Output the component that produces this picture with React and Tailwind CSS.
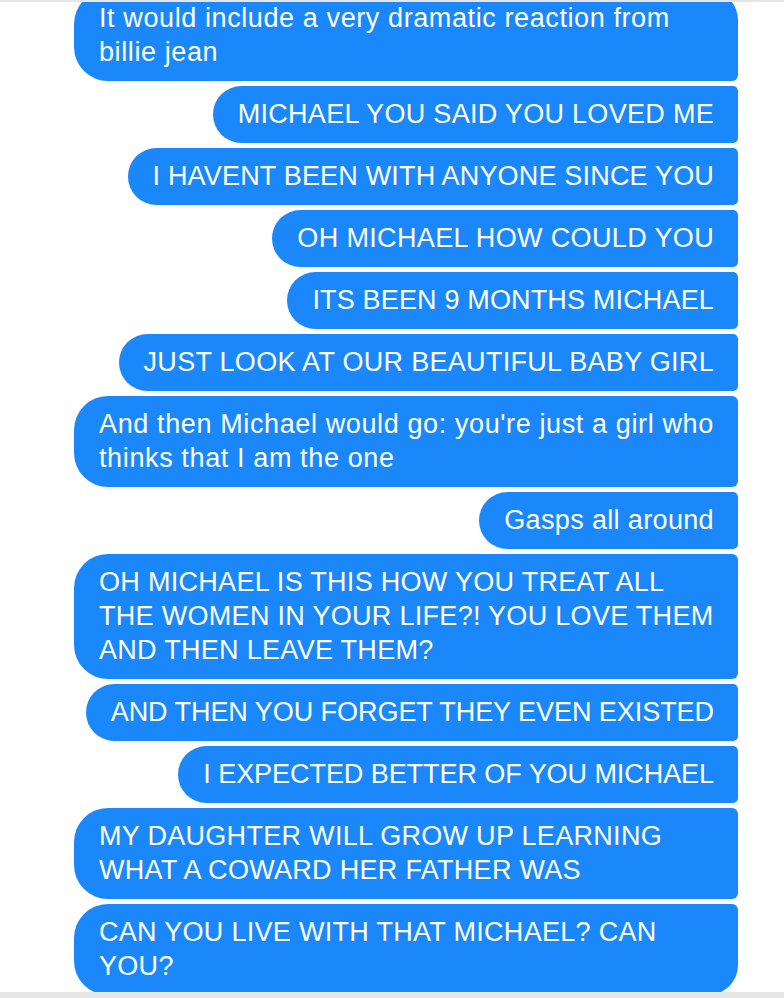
import React from 'react';

const messages = [
  { lines: ['It would include a very dramatic reaction from', 'billie jean'], track: 'tracking-[0.6px]' },
  { lines: ['MICHAEL YOU SAID YOU LOVED ME'] },
  { lines: ['I HAVENT BEEN WITH ANYONE SINCE YOU'], track: 'tracking-[0.18px]' },
  { lines: ['OH MICHAEL HOW COULD YOU'], track: 'tracking-[0.36px]' },
  { lines: ['ITS BEEN 9 MONTHS MICHAEL'], track: 'tracking-[0.16px]' },
  { lines: ['JUST LOOK AT OUR BEAUTIFUL BABY GIRL'] },
  {
    lines: ["And then Michael would go: you're just a girl who", 'thinks that I am the one'],
    track: 'tracking-[0.62px]',
  },
  { lines: ['Gasps all around'], track: 'tracking-[0.35px]' },
  {
    lines: [
      'OH MICHAEL IS THIS HOW YOU TREAT ALL',
      'THE WOMEN IN YOUR LIFE?! YOU LOVE THEM',
      'AND THEN LEAVE THEM?',
    ],
  },
  { lines: ['AND THEN YOU FORGET THEY EVEN EXISTED'], track: 'tracking-[-0.05px]' },
  { lines: ['I EXPECTED BETTER OF YOU MICHAEL'], track: 'tracking-[-0.06px]' },
  { lines: ['MY DAUGHTER WILL GROW UP LEARNING', 'WHAT A COWARD HER FATHER WAS'] },
  { lines: ['CAN YOU LIVE WITH THAT MICHAEL? CAN', 'YOU?'] },
];

// bubble corner shape depends on its place in the group
const cornerFor = (i, total) => {
  if (i === 0) return 'rounded-tr-[30px] rounded-br-[6px]';
  if (i === total - 1) return 'rounded-tr-[6px] rounded-br-[30px]';
  return 'rounded-r-[6px]';
};

const Bubble = ({ lines, corner, track = 'tracking-[0.3px]' }) => {
  const multi = lines.length > 1;
  return (
    <div
      className={`bg-[#1a88fa] text-white text-[27px] leading-[34px] pl-[25px] pr-[24px] pt-[11px] pb-[12px] rounded-l-[34px] whitespace-nowrap ${track} ${corner} ${
        multi ? 'w-[664px]' : ''
      }`}
    >
      {lines.map((l, i) => (
        <div key={i}>{l}</div>
      ))}
    </div>
  );
};

export default function App() {
  return (
    <div className="w-[784px] h-[998px] bg-white flex flex-col overflow-hidden font-['Liberation_Sans',Arial,sans-serif]">
      <div className="h-[2px] bg-[#e6e6e6] shrink-0" />
      <div className="flex-1 overflow-hidden">
        <div className="flex flex-col items-end gap-[5px] pr-[46px] mt-[-12px]">
          {messages.map((m, i) => (
            <Bubble
              key={i}
              lines={m.lines}
              track={m.track}
              corner={cornerFor(i, messages.length)}
            />
          ))}
        </div>
      </div>
      <div className="h-[6px] bg-[#e6e6e6] shrink-0" />
    </div>
  );
}
